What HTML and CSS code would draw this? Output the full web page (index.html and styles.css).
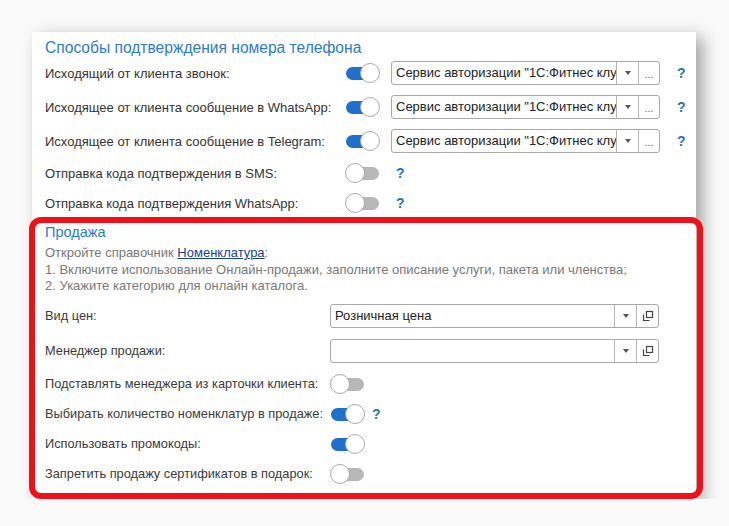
FILE: index.html
```html
<!DOCTYPE html>
<html lang="ru">
  <head>
    <meta charset="UTF-8" />
    <meta name="viewport" content="width=device-width, initial-scale=1.0" />
    <title>Настройки онлайн-сервисов</title>
    <link rel="stylesheet" href="styles.css">
  </head>
  <body>
    <div class="panel">
      <div class="group-title">Способы подтверждения номера телефона</div>

      <div class="row row-field">
        <div class="label">Исходящий от клиента звонок:</div>
        <span class="toggle on"></span>
        <div class="select">
          <div class="select-text">Сервис авторизации "1С:Фитнес клуб"</div>
          <div class="select-btn"><span class="caret"></span></div>
          <div class="select-btn dots">...</div>
        </div>
        <span class="help">?</span>
      </div>

      <div class="row row-field">
        <div class="label">Исходящее от клиента сообщение в WhatsApp:</div>
        <span class="toggle on"></span>
        <div class="select">
          <div class="select-text">Сервис авторизации "1С:Фитнес клуб"</div>
          <div class="select-btn"><span class="caret"></span></div>
          <div class="select-btn dots">...</div>
        </div>
        <span class="help">?</span>
      </div>

      <div class="row row-field">
        <div class="label">Исходящее от клиента сообщение в Telegram:</div>
        <span class="toggle on"></span>
        <div class="select">
          <div class="select-text">Сервис авторизации "1С:Фитнес клуб"</div>
          <div class="select-btn"><span class="caret"></span></div>
          <div class="select-btn dots">...</div>
        </div>
        <span class="help">?</span>
      </div>

      <div class="row">
        <div class="label">Отправка кода подтверждения в SMS:</div>
        <span class="toggle"></span>
        <span class="help help-near">?</span>
      </div>

      <div class="row">
        <div class="label">Отправка кода подтверждения WhatsApp:</div>
        <span class="toggle"></span>
        <span class="help help-near">?</span>
      </div>

      <div class="sale">
        <div class="group-title small">Продажа</div>
        <div class="hint">
          Откройте справочник <a href="#" class="link">Номенклатура</a>:<br>
          1. Включите использование Онлайн-продажи, заполните описание услуги, пакета или членства;<br>
          2. Укажите категорию для онлайн каталога.
        </div>

        <div class="row row-field">
          <div class="label">Вид цен:</div>
          <div class="select wide">
            <div class="select-text">Розничная цена</div>
            <div class="select-btn"><span class="caret"></span></div>
            <div class="select-btn open">
              <svg width="12" height="12" viewBox="0 0 12 12">
                <rect x="4.5" y="1.5" width="6" height="6" fill="none" stroke="#444" stroke-width="1.2" />
                <path d="M1.5 4.5 V10.5 H7.5" fill="none" stroke="#444" stroke-width="1.2" />
              </svg>
            </div>
          </div>
        </div>

        <div class="row row-field">
          <div class="label">Менеджер продажи:</div>
          <div class="select wide">
            <div class="select-text"></div>
            <div class="select-btn"><span class="caret"></span></div>
            <div class="select-btn open">
              <svg width="12" height="12" viewBox="0 0 12 12">
                <rect x="4.5" y="1.5" width="6" height="6" fill="none" stroke="#444" stroke-width="1.2" />
                <path d="M1.5 4.5 V10.5 H7.5" fill="none" stroke="#444" stroke-width="1.2" />
              </svg>
            </div>
          </div>
        </div>

        <div class="row">
          <div class="label">Подставлять менеджера из карточки клиента:</div>
          <span class="toggle"></span>
        </div>

        <div class="row">
          <div class="label">Выбирать количество номенклатур в продаже:</div>
          <span class="toggle on"></span>
          <span class="help help-close">?</span>
        </div>

        <div class="row">
          <div class="label">Использовать промокоды:</div>
          <span class="toggle on"></span>
        </div>

        <div class="row">
          <div class="label">Запретить продажу сертификатов в подарок:</div>
          <span class="toggle"></span>
        </div>
      </div>
    </div>
  </body>
</html>
```

FILE: styles.css
```css
body {
  margin: 0;
  background-color: #fafafa;
  font-family: 'Liberation Sans', Arial, sans-serif;
  font-size: 13px;
  color: #333;
}
.panel {
  margin: 32px 0 0 32px;
  width: 664px;
  background-color: white;
  padding: 7px 0 0 13px;
  box-sizing: border-box;
  box-shadow: 7px 5px 16px rgba(0, 0, 0, 0.35);
}
.group-title {
  color: #2b7bd2;
  font-size: 15.6px;
  line-height: 18px;
  margin-bottom: 4px;
}
.row {
  display: flex;
  align-items: center;
  height: 20px;
  margin-bottom: 10px;
}
.row-field {
  height: 24px;
}
.label {
  width: 300px;
  flex-shrink: 0;
  white-space: nowrap;
}
.toggle {
  position: relative;
  width: 35px;
  height: 20px;
  flex-shrink: 0;
}
.toggle::before {
  content: '';
  position: absolute;
  left: 1px;
  top: 4px;
  width: 33px;
  height: 13px;
  border-radius: 7px;
  background-color: #b7b7b7;
}
.toggle::after {
  content: '';
  position: absolute;
  left: 0;
  top: 0;
  width: 18px;
  height: 18px;
  border-radius: 50%;
  background-color: white;
  border: 1px solid #a9a9a9;
}
.toggle.on::before {
  background-color: #1f6fcc;
}
.toggle.on::after {
  left: 15px;
}
.select {
  display: flex;
  margin-left: 11px;
  width: 269px;
  height: 24px;
  box-sizing: border-box;
  border: 1px solid #a8a8a8;
  border-radius: 3px;
  background-color: white;
}
.select-text {
  flex: 1;
  overflow: hidden;
  white-space: nowrap;
  padding-left: 4px;
  line-height: 22px;
  font-size: 13px;
  color: #222;
}
.select-btn {
  width: 21px;
  border-left: 1px solid #b5b5b5;
  display: flex;
  align-items: center;
  justify-content: center;
  color: #666;
}
.caret {
  width: 0;
  height: 0;
  border-left: 3px solid transparent;
  border-right: 3px solid transparent;
  border-top: 4px solid #555;
}
.dots {
  font-size: 11px;
  align-items: flex-end;
  padding-bottom: 4px;
  box-sizing: border-box;
}
.help {
  color: #1e73c8;
  font-size: 14px;
  font-weight: bold;
  margin-left: 17px;
}
.help-near {
  margin-left: 16px;
}
.help-close {
  margin-left: 7px;
}
.sale {
  margin: -6px 0 0 -16px;
  width: 674px;
  box-sizing: border-box;
  border: 6px solid #f0101a;
  border-radius: 12px;
  padding: 0 0 0 10px;
}
.sale .row:last-child {
  margin-bottom: 9px;
}
.group-title.small {
  font-size: 14.5px;
}
.sale .label {
  width: 285px;
  font-size: 12.8px;
  color: #3a3a3a;
}
.hint {
  color: #787878;
  font-size: 13px;
  line-height: 16.5px;
  margin-bottom: 9px;
}
.link {
  color: #1a3f95;
}
.select.wide {
  margin-left: 0;
  width: 329px;
}
.open svg {
  display: block;
}
.sale .row-field {
  margin-bottom: 11px;
}
```
